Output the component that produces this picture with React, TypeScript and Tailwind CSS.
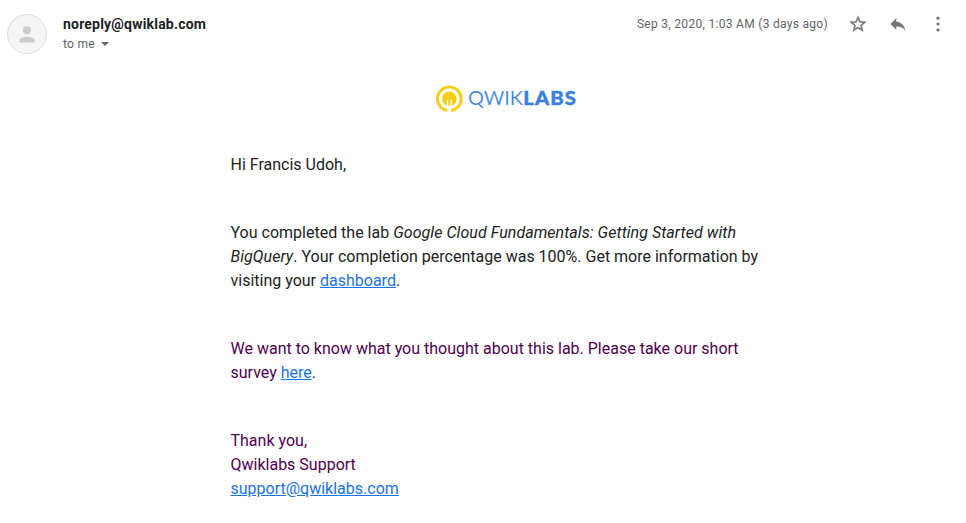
import React from "react";

function Avatar() {
  return (
    <div className="flex h-10 w-10 shrink-0 items-center justify-center rounded-full border border-[#dedede] bg-[#f5f5f5]">
      <svg width="24" height="24" viewBox="0 0 24 24" fill="#cccccc">
        <circle cx="12" cy="8.200" r="4" />
        <path d="M4.300 20.500v-2.200c0-2.300 5-3.600 7.700-3.600s7.700 1.300 7.700 3.600v2.200z" />
      </svg>
    </div>
  );
}

function Logo() {
  return (
    <div className="flex h-[28px] items-center text-[#3a80e0]">
      <svg width="28" height="28" viewBox="0 0 28 28" fill="none">
        <path d="M12.300 25.500A11.800 11.800 0 1 1 16.300 25.500" stroke="#f4cd16" strokeWidth="3" />
        <circle cx="14.300" cy="13.900" r="7.300" fill="#f4cd16" />
        <path d="M11.900 22v-6.800l2.400-1.500 2.400 1.500V22z" fill="white" />
        <path d="M14.300 13v7.800" stroke="#f4cd16" strokeWidth="2.200" />
      </svg>
      <svg className="ml-1 overflow-visible" width="112" height="28" viewBox="0 0 112 28" fill="currentColor" fontFamily="Lato, sans-serif">
        <text x="1" y="20" fontSize="19" fontWeight="400" textLength="55" lengthAdjust="spacingAndGlyphs" stroke="white" strokeWidth="0.200">QWIK</text>
        <g transform="translate(56.300 20) scale(1.070 1)">
          <text fontSize="19" fontWeight="900" textLength="49.200" stroke="currentColor" strokeWidth="0.400">LABS</text>
        </g>
      </svg>
    </div>
  );
}

function Link({ children }: { children: React.ReactNode }) {
  return <a href="#" className="text-[#1a73e8] underline">{children}</a>;
}

export default function App() {
  return (
    <div className="h-[523px] w-full overflow-hidden bg-white font-['Roboto',sans-serif] text-[#222]">
      <header className="flex h-[60px] items-start pl-[7px] pr-[18px] pt-[14px]">
        <Avatar />
        <div className="ml-4 flex-1">
          <div className="text-[14px] font-bold leading-5 tracking-[0.2px] text-[#202124]">noreply@qwiklab.com</div>
          <div className="flex items-center text-[12px] leading-5 tracking-[0.3px] text-[#5f6368]">
            to me
            <svg className="ml-1.5" width="8" height="4" viewBox="0 0 8 4"><path d="M0 0h8L4 4z" fill="#666" /></svg>
          </div>
        </div>
        <div className="flex h-5 items-center text-[#757575]">
          <span className="text-[12px] tracking-[0.3px] text-[#5f6368]">Sep 3, 2020, 1:03 AM (3 days ago)</span>
          <svg className="ml-5" width="20" height="20" viewBox="0 0 24 24" fill="currentColor" stroke="currentColor" strokeWidth="0.400"><path d="M22 9.240l-7.190-.62L12 2 9.190 8.630 2 9.240l5.460 4.730L5.820 21 12 17.270 18.180 21l-1.630-7.030L22 9.240zM12 15.400l-3.760 2.270 1-4.280-3.320-2.880 4.380-.38L12 6.100l1.710 4.040 4.380.38-3.320 2.880 1 4.280L12 15.400z" /></svg>
          <svg className="ml-5" width="20" height="20" viewBox="0 0 24 24" fill="currentColor"><path d="M10 9V5l-7 7 7 7v-4.100c5 0 8.500 1.600 11 5.100-1-5-4-10-11-11z" /></svg>
          <svg className="ml-5" width="20" height="20" viewBox="0 0 24 24" fill="currentColor"><circle cx="12" cy="5" r="1.900" /><circle cx="12" cy="12" r="1.900" /><circle cx="12" cy="19" r="1.900" /></svg>
        </div>
      </header>
      <main className="ml-[230.5px] w-[550px] text-[16px] leading-6">
        <div className="flex h-[93px] pl-[204.5px] pt-[25px]"><Logo /></div>
        <p className="mb-11">Hi Francis Udoh,</p>
        <p className="mb-11">
          You completed the lab <em className="tracking-[0.05px]">Google Cloud Fundamentals: Getting Started with<br />BigQuery</em>. Your completion percentage was 100%. Get more information by<br />visiting your <Link>dashboard</Link>.
        </p>
        <p className="mb-11 text-[#500050]">
          We want to know what you thought about this lab. Please take our short<br />survey <Link>here</Link>.
        </p>
        <p className="text-[#500050]">
          Thank you,<br />Qwiklabs Support<br /><Link>support@qwiklabs.com</Link>
        </p>
      </main>
    </div>
  );
}
